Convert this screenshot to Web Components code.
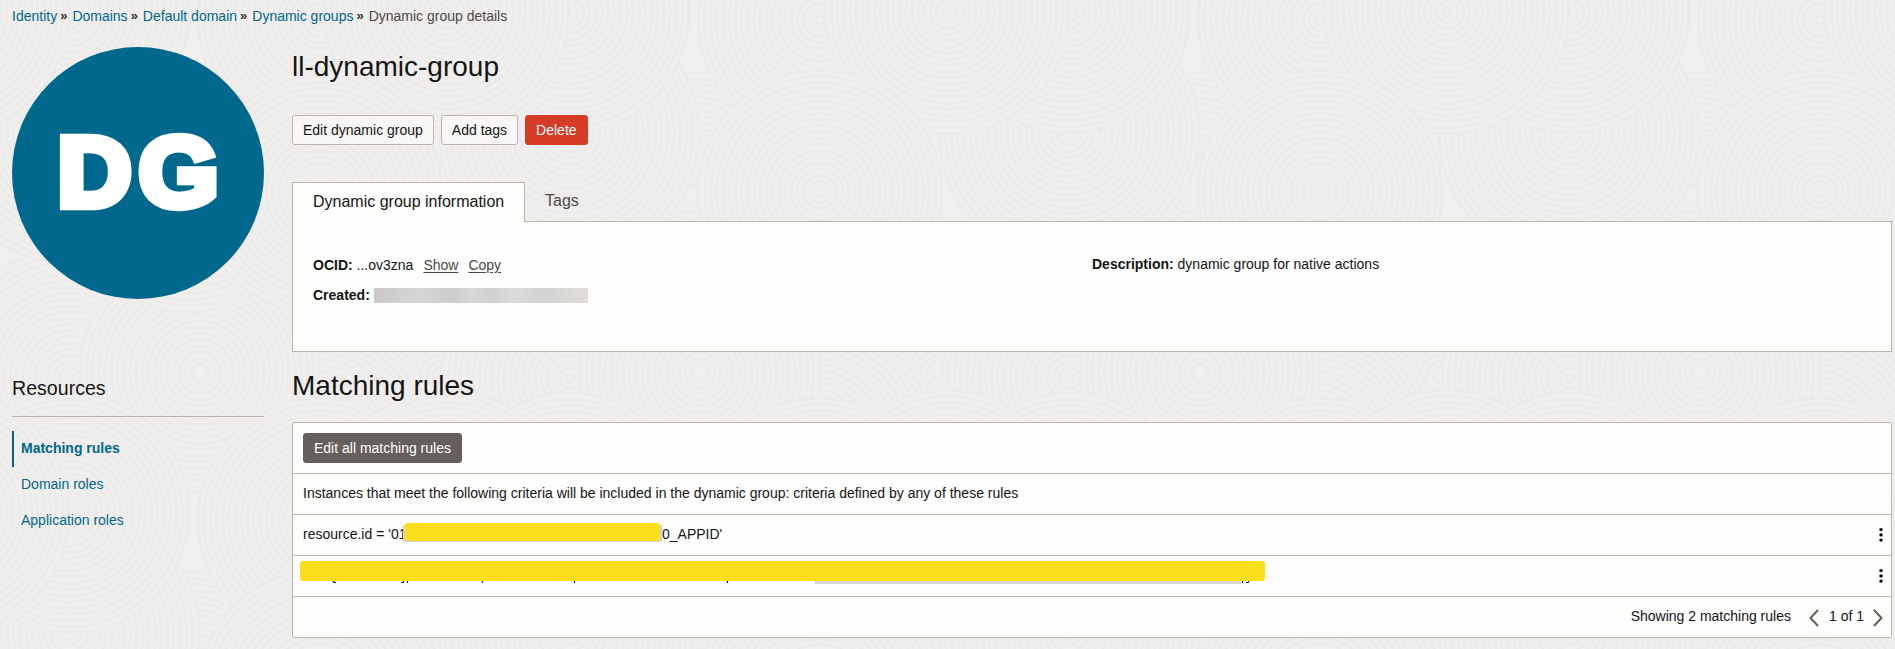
<!DOCTYPE html>
<html lang="en">
<head>
<meta charset="utf-8">
<title>Dynamic group details</title>
<style>
html,body{margin:0;height:100%}
body{background:#f0efee;color:#161513;font:14px/18px "Liberation Sans",Arial,sans-serif;overflow:hidden}
</style>
</head>
<body>
<oc-page></oc-page>
<script>
const define=(name,html,init)=>customElements.define(name,class extends HTMLElement{
  connectedCallback(){
    if(this.shadowRoot)return;
    const t=document.createElement('template');
    t.innerHTML=html;
    this.attachShadow({mode:'open'}).append(t.content.cloneNode(true));
    if(init)init(this,this.shadowRoot);
  }
});

// Faint tiled texture of overlapping concentric rings, 500px square.
define('oc-texture',`<style>:host{display:block;position:absolute;inset:0;z-index:-1}svg{display:block;width:100%;height:100%}</style><div style="height:100%"></div>`,(h,r)=>{
  const discs=[[440,375,125],[314,440,125],[70,378,128],[200,373,120],[190,192,120],[69,133,130],[320,20,122],[69,13,120],[447,12,122],[320,192,122]];
  let s='';
  for(const [x,y,R] of discs)for(const dx of [-500,0,500])for(const dy of [-500,0,500]){
    const cx=x+dx,cy=y+dy;
    if(cx+R<0||cx-R>500||cy+R<0||cy-R>500)continue;
    s+=`<circle cx="${cx}" cy="${cy}" r="${R}" fill="#f0efee"/>`;
    for(let q=R;q>3;q-=6.2)s+=`<circle cx="${cx}" cy="${cy}" r="${q.toFixed(1)}"/>`;
  }
  r.querySelector('div').innerHTML=`<svg><defs><pattern id="p" width="500" height="500" patternUnits="userSpaceOnUse"><rect width="500" height="500" fill="#f0efee"/><g fill="none" stroke="#ecebea" stroke-width="2">${s}</g></pattern></defs><rect width="100%" height="100%" fill="url(#p)"/></svg>`;
});

define('oc-crumbs',`<style>
:host{display:flex;height:18px;padding:7px 12px 0;white-space:pre}
::slotted(a){color:#00688c}
::slotted(b){font-weight:bold;font-size:13px;color:#312d2a;margin:0 5px 0 3px}
::slotted(span){color:#4b4845}
</style><slot></slot>`);

define('oc-avatar',`<style>
:host{display:flex;align-items:center;justify-content:center;width:252px;height:252px;border-radius:50%;background:#00688c;color:#fff}
span{font:bold 98px/98px "Liberation Sans",Arial,sans-serif;-webkit-text-stroke:8.5px #fff;letter-spacing:7px;margin:-3px -7px 0 0;transform:scaleX(1.045)}
</style><span><slot></slot></span>`);

define('oc-button',`<style>
:host{display:inline-flex;box-sizing:border-box;height:30px;padding:0 10px;align-items:center;justify-content:center;border:1px solid #bbb5ae;border-radius:3px;background:#f8f7f6;color:#161513;white-space:nowrap}
:host([kind=danger]){background:#d63b25;border-color:#d63b25;color:#fff}
:host([kind=dark]){background:#665f5b;border-color:#665f5b;color:#fff}
</style><slot></slot>`);

define('oc-nav-item',`<style>
:host{display:flex;align-items:center;height:36px;box-sizing:border-box;padding:0 0 2px 7px;border-left:2px solid transparent;color:#00688c}
:host([active]){border-color:#00688c;font-weight:bold}
</style><slot></slot>`);

define('oc-sidebar',`<style>
:host{display:block;width:252px}
h2{margin:77px 0 0;height:40px;border-bottom:1px solid #bbb5ae;font:19.6px/24px "Liberation Sans",Arial,sans-serif}
nav{margin-top:14px}
</style><oc-avatar>DG</oc-avatar><h2>Resources</h2>
<nav><oc-nav-item active>Matching rules</oc-nav-item><oc-nav-item>Domain roles</oc-nav-item><oc-nav-item>Application roles</oc-nav-item></nav>`);

define('oc-info',`<style>
:host{display:block}
.tabs{display:flex;height:40px;font-size:16px;position:relative;z-index:1;margin-bottom:-1px}
.on{box-sizing:border-box;width:233px;height:40px;padding:10px 0 0 20px;border:1px solid #bbb5ae;border-bottom:0;background:#fdfdfc}
.off{padding:10px 0 0 20px;color:#4b4845}
.panel{box-sizing:border-box;height:131px;border:1px solid #bbb5ae;background:#fdfdfc;display:grid;grid-template-columns:779px 1fr;padding:33px 20px 0}
p{margin:0 0 12px;display:flex;height:18px;align-items:center;white-space:pre}
p+p{margin:0}
.u{text-decoration:underline;color:#4b4845;margin-left:10px;text-underline-offset:2px}
i{width:214px;height:15px;margin:1px 0 0 4px;background:linear-gradient(90deg,#cbc7ca,#d6d5d3 20%,#cecdcc 38%,#d9d8d6 45%,#d2d0cf 55%,#dedcda 66%,#d3d2d0 78%,#e0ddda)}
</style>
<div class="tabs"><div class="on">Dynamic group information</div><div class="off">Tags</div></div>
<div class="panel"><div style="padding-top:1px"><p><b>OCID: </b>...ov3zna<span class="u">Show</span><span class="u">Copy</span></p><p><b>Created:</b><i></i></p></div>
<div><p><b>Description: </b>dynamic group for native actions</p></div></div>`);

define('oc-row',`<style>
:host{display:flex;align-items:center;justify-content:space-between;height:40px;padding:0 7px 0 10px;border-bottom:1px solid #bbb5ae;position:relative;white-space:pre}
div{margin-top:-2px}
svg{display:none;margin-top:0}
:host([menu]) svg{display:block}
</style><div><slot></slot></div><svg width="6" height="18"><circle cx="3" cy="3.6" r="1.7"/><circle cx="3" cy="8.9" r="1.7"/><circle cx="3" cy="14.1" r="1.7"/></svg>`);

define('oc-rules',`<style>
:host{display:block;box-sizing:border-box;height:216px;border:1px solid #bbb5ae;border-radius:3px;background:#fdfdfc}
.bar{height:50px;display:flex;align-items:center;padding-left:10px;border-bottom:1px solid #bbb5ae}
.mask{position:absolute;background:#fbdf1b;border-radius:3px}
.shade{position:absolute;background:#d5d3d4}
.rest{position:absolute;left:369px;top:10px}
.marks{position:absolute;left:0;top:25px}
.foot{display:flex;height:38px;align-items:center;justify-content:flex-end;padding-right:8px}
.foot svg{margin-top:4px}
</style>
<div class="bar"><oc-button kind="dark">Edit all matching rules</oc-button></div>
<oc-row>Instances that meet the following criteria will be included in the dynamic group: criteria defined by any of these rules</oc-row>
<oc-row menu>resource.id = '01<span class="shade" style="left:110px;top:10px;width:259px;height:17px"></span><span class="mask" style="left:112px;top:8px;width:255px;height:18px"></span><span class="rest">0_APPID'</span></oc-row>
<oc-row menu><span class="shade" style="left:522px;top:24px;width:426px;height:4px"></span><svg class="marks" width="970" height="3" stroke="#161513" fill="none" stroke-width="1.2"><path d="M40 0l1 1.5h2M108 1.5h2l1-1.5M114.500 0v2M190 0l-1 1.800M281.500 0v2M434.500 0v2M949.500 0v2M953 1.500h2l1-1.500"/></svg><span class="mask" style="left:7px;top:5px;width:965px;height:20px"></span></oc-row>
<div class="foot">Showing 2 matching rules
<svg style="margin-left:18px;margin-right:10px" width="10" height="18" fill="none" stroke="#665f5b" stroke-width="2"><path d="M9 1L1.500 9L9 17"/></svg>1 of 1<svg style="margin-left:9px" width="10" height="18" fill="none" stroke="#665f5b" stroke-width="2"><path d="M1 1L8.500 9L1 17"/></svg></div>`);

define('oc-page',`<style>
:host{display:block;position:relative;height:649px;z-index:0}
.cols{display:grid;grid-template-columns:252px 1600px;column-gap:28px;padding:22px 0 0 12px}
h1{margin:0;font:28px/32px "Liberation Sans",Arial,sans-serif;white-space:nowrap}
.actions{display:flex;gap:7px;margin:32px 0 37px}
.second{margin:18px 0 20px}
main{padding-top:4px}
</style>
<oc-texture></oc-texture>
<oc-crumbs><a>Identity</a><b>»</b><a>Domains</a><b>»</b><a>Default domain</a><b>»</b><a>Dynamic groups</a><b>»</b><span>Dynamic group details</span></oc-crumbs>
<div class="cols"><oc-sidebar></oc-sidebar>
<main><h1>ll-dynamic-group</h1>
<div class="actions"><oc-button>Edit dynamic group</oc-button><oc-button>Add tags</oc-button><oc-button kind="danger">Delete</oc-button></div>
<oc-info></oc-info>
<h1 class="second">Matching rules</h1>
<oc-rules></oc-rules></main></div>`);
</script>
</body>
</html>
